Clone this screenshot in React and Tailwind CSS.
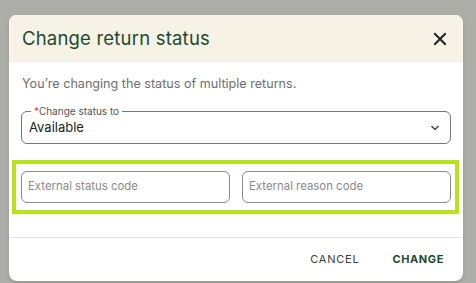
import React from 'react';

const ChangeReturnStatusDialog = () => {
  return (
    <div className="w-[476px] h-[283px] bg-[#adaeaa] pt-[15px] pl-[9px] font-['Inter','Liberation_Sans',sans-serif]">
      <div className="w-[454px] h-[266px] bg-white rounded-lg overflow-hidden shadow-md flex flex-col">
        {/* Header */}
        <div className="h-[47px] bg-[#f6f2e6] flex items-center justify-between pl-[13px] pr-[13px]">
          <h2 className="text-[18.5px] text-[#1d4a2e] tracking-[0.2px]">Change return status</h2>
          <button className="text-[#222] w-5 h-5 flex items-center justify-center">
            <svg width="14" height="14" viewBox="0 0 14 14" fill="none" stroke="currentColor" strokeWidth="2" strokeLinecap="square">
              <path d="M2 2l10 10M12 2L2 12" />
            </svg>
          </button>
        </div>

        {/* Body */}
        <div className="px-3 pt-[13px] flex flex-col">
          <p className="pl-px text-[12.6px] leading-[18px] text-[#6e6e6e]">
            You’re changing the status of multiple returns.
          </p>

          <div className="relative mt-[18px] h-[33px] border border-[#777] rounded-md flex items-center justify-between pl-[7px] pr-[10px]">
            <span className="absolute -top-[8px] left-[9px] bg-white px-[3px] text-[10px] leading-[14px] text-[#555]">
              <span className="text-[#d9442b]">*</span>Change status to
            </span>
            <span className="text-[13px] text-[#222] pt-[1px]">Available</span>
            <svg width="10" height="6" viewBox="0 0 10 6" fill="none" stroke="#444" strokeWidth="1.5">
              <path d="M1.5 1l3.5 3.5L8.5 1" />
            </svg>
          </div>

          <div className="mt-[16px] -ml-[9px] -mr-[8px] border-4 border-[#b6e31c] pt-[7px] pb-[7px] pl-[5px] pr-[4px] flex gap-3">
            <div className="flex-1 h-[32px] border border-[#8a8a8a] rounded-md flex items-center px-[6px]">
              <span className="text-[11.4px] text-[#8a8a8a]">External status code</span>
            </div>
            <div className="flex-1 h-[32px] border border-[#8a8a8a] rounded-md flex items-center px-[6px]">
              <span className="text-[11.4px] text-[#8a8a8a]">External reason code</span>
            </div>
          </div>
        </div>

        {/* Footer */}
        <div className="mt-[23px] border-t border-[#e2e2e2] flex-1 flex items-center justify-end pr-[19px] gap-[33px] pb-[1px]">
          <button className="text-[11px] tracking-[0.8px] text-[#3d3d3d]">CANCEL</button>
          <button className="text-[11px] tracking-[0.6px] text-[#1d4a2e] font-bold">CHANGE</button>
        </div>
      </div>
    </div>
  );
};

export default function App() {
  return <ChangeReturnStatusDialog />;
}
